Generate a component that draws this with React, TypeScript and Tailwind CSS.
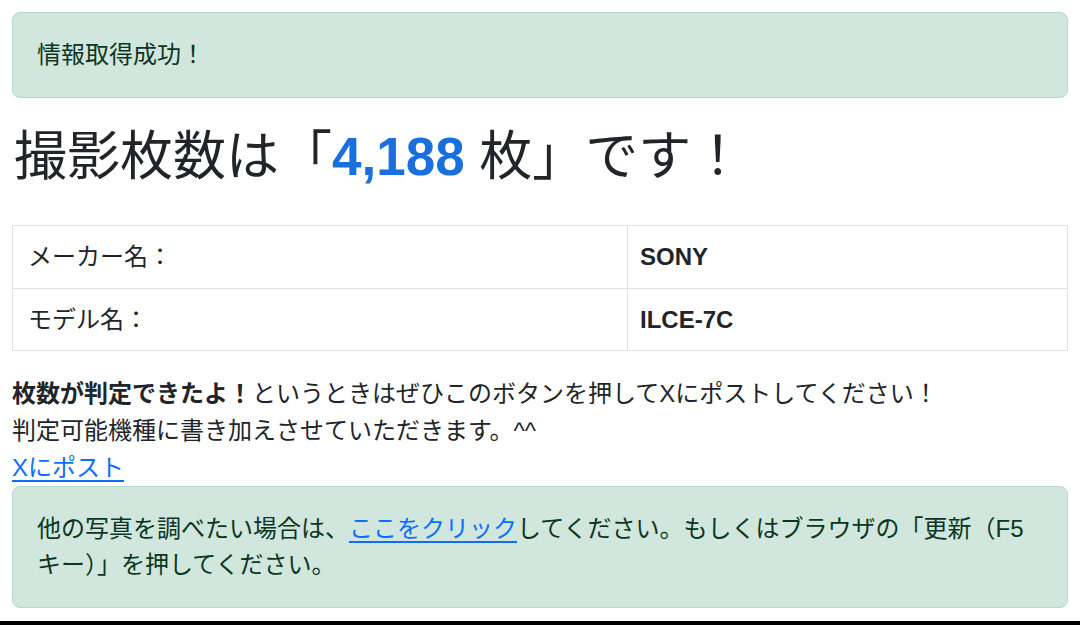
import React from "react";

const font = "font-['Liberation_Sans','Noto_Sans_CJK_JP',sans-serif]";

export default function App() {
  return (
    <div className={`w-[1080px] h-[625px] bg-white text-[#212529] ${font} flex flex-col`}>
      <div className="flex-1 px-3 pt-3">
        {/* Success alert */}
        <div className="border border-[#b6d9c8] bg-[#d1e7dd] text-[#0a3622] rounded-lg px-6 py-6 text-[24px] leading-[36px]">
          情報取得成功！
        </div>

        {/* Heading */}
        <h1 className="mt-[29px] mb-[38px] text-[53px] leading-[60px] font-normal pl-[2px]">
          撮影枚数は「
          <span className="text-[#1a6fdc] font-bold">4,188</span> 枚」です！
        </h1>

        {/* Info table */}
        <table className="w-full border-collapse text-[24px]">
          <tbody>
            <tr>
              <td className="w-[615px] border border-[#dee2e6] px-[15px] h-[63px]">
                メーカー名：
              </td>
              <td className="border border-[#dee2e6] px-3 h-[63px] font-bold">
                SONY
              </td>
            </tr>
            <tr>
              <td className="w-[615px] border border-[#dee2e6] px-[15px] h-[62px]">
                モデル名：
              </td>
              <td className="border border-[#dee2e6] px-3 h-[62px] font-bold">
                ILCE-7C
              </td>
            </tr>
          </tbody>
        </table>

        {/* Post prompt */}
        <div className="mt-6 text-[24px] leading-[37px]">
          <p>
            <b>枚数が判定できたよ！</b>
            というときはぜひこのボタンを押してXにポストしてください！
          </p>
          <p>判定可能機種に書き加えさせていただきます。^^</p>
          <a href="#" className="text-[#0d6efd] underline underline-offset-4">
            Xにポスト
          </a>
        </div>

        {/* Retry alert */}
        <div className="border border-[#b6d9c8] bg-[#d1e7dd] text-[#0a3622] rounded-lg px-6 py-6 text-[24px] leading-[36px]">
          他の写真を調べたい場合は、
          <a href="#" className="text-[#0d6efd] underline underline-offset-4">
            ここをクリック
          </a>
          してください。もしくはブラウザの「更新（F5キー）」を押してください。
        </div>
      </div>
      <div className="h-[4px] bg-black" />
    </div>
  );
}
